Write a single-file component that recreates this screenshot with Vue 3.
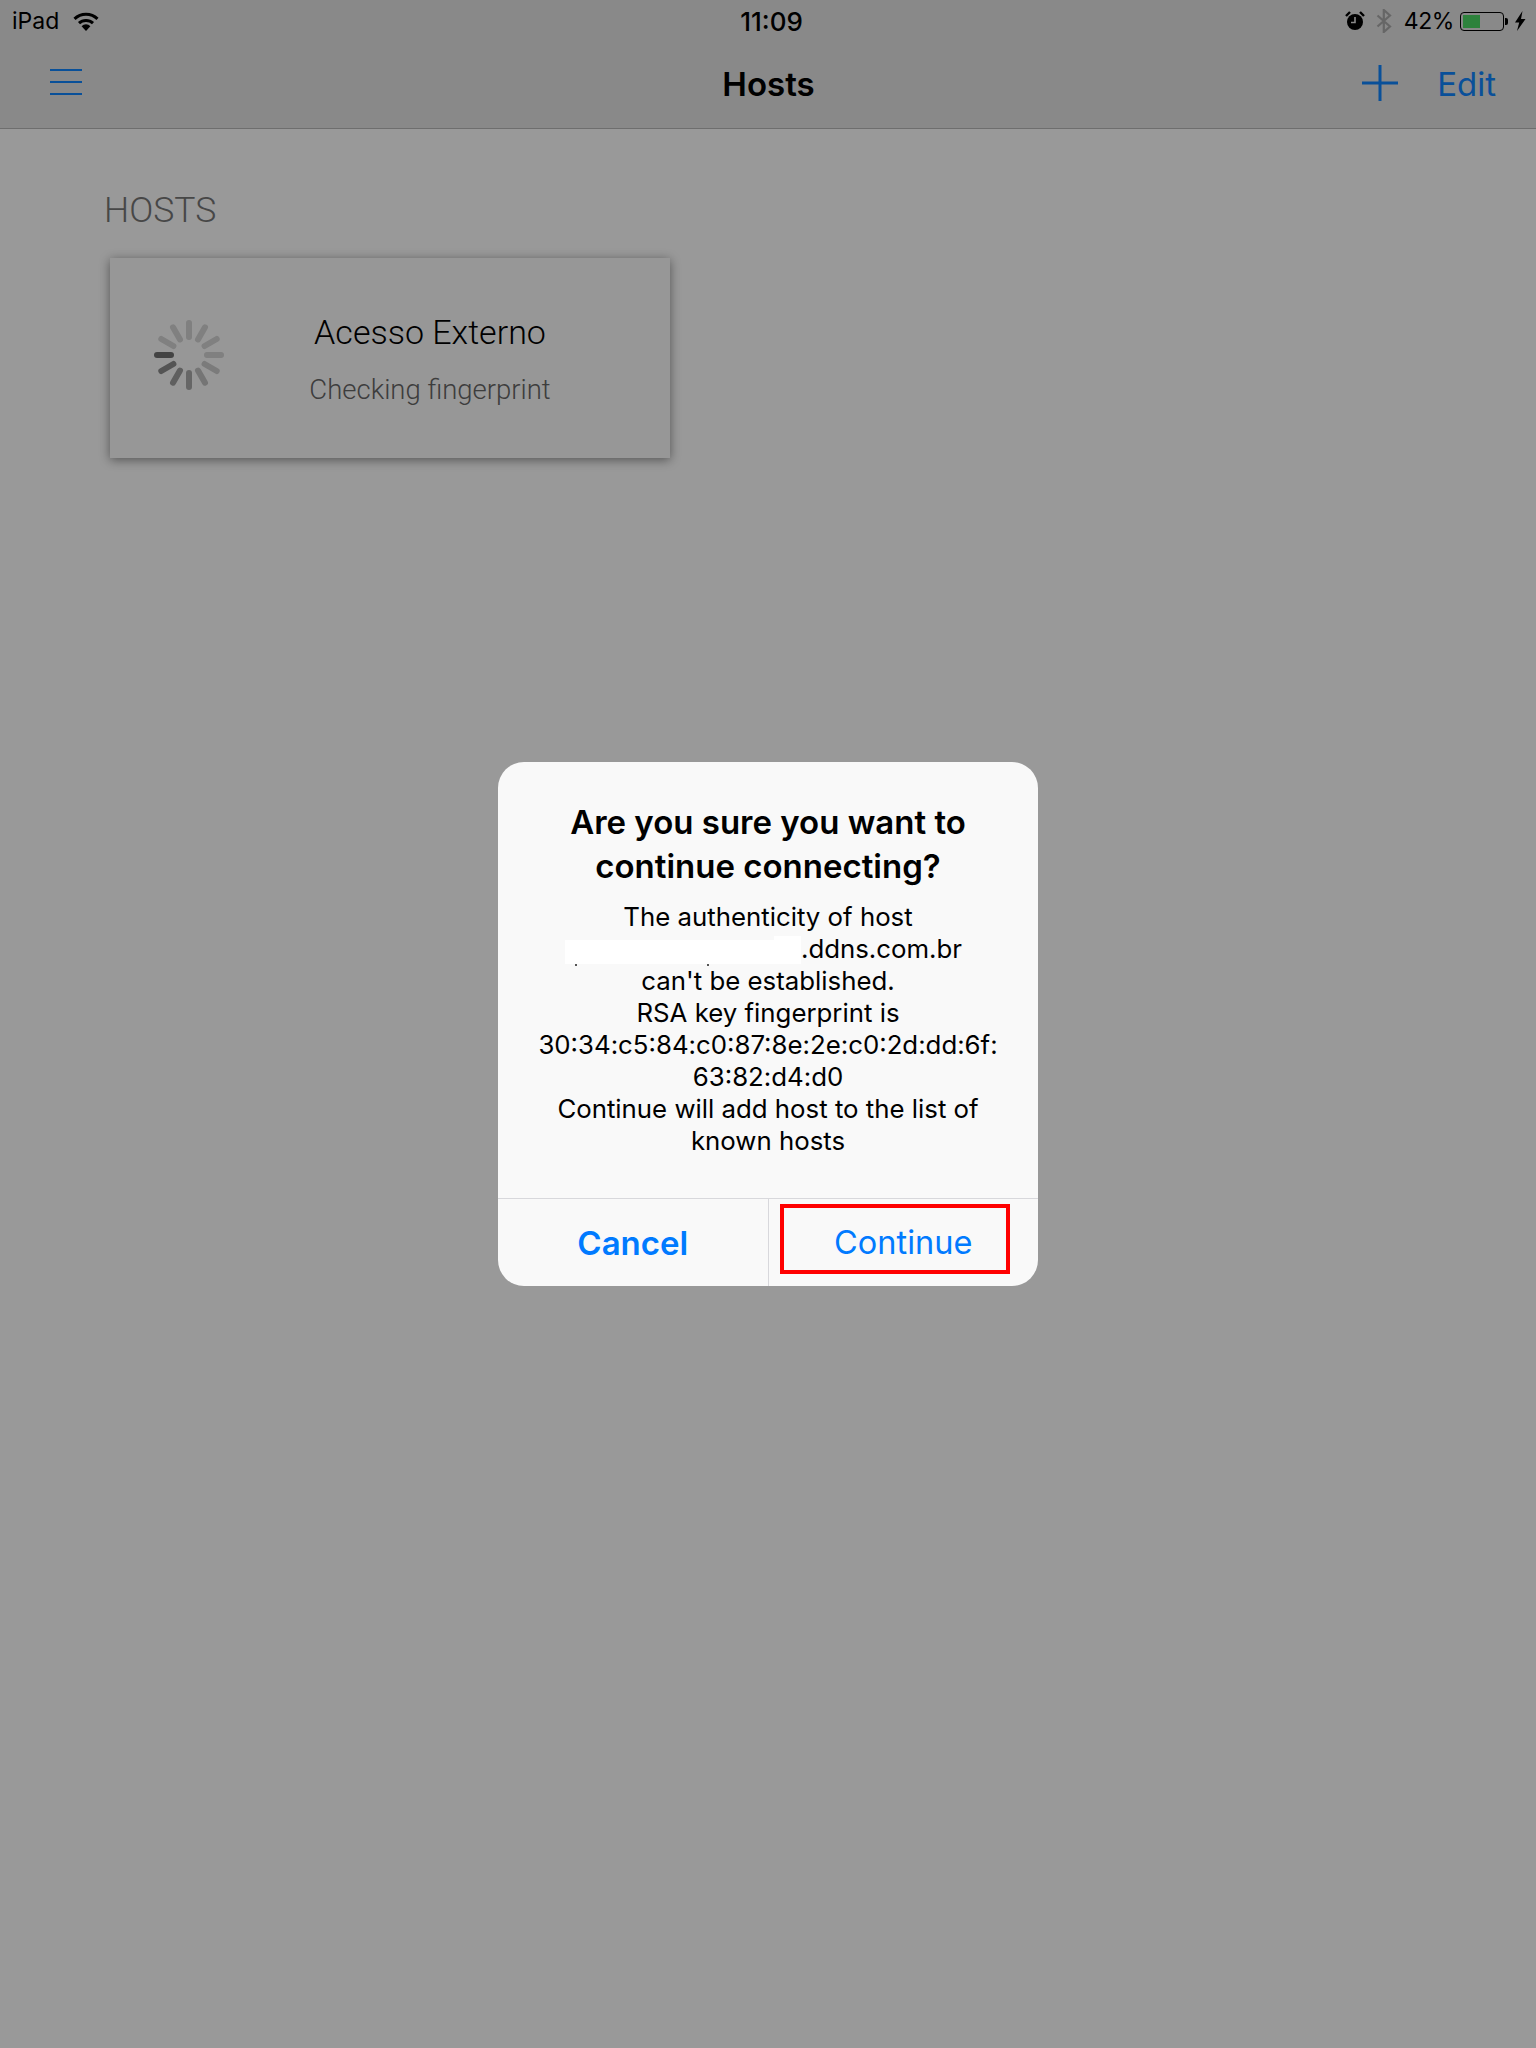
<script setup>
// spokes of the activity indicator, clockwise from 9 o'clock; the grey sits under the scrim
const spokeGreys = [113, 213, 213, 213, 213, 213, 213, 205, 195, 170, 158, 140]
const spokes = spokeGreys.map((g, i) => ({
  angle: i * 30,
  color: `rgb(${g},${g},${g})`,
}))

const message = [
  "can't be established.",
  'RSA key fingerprint is',
  '30:34:c5:84:c0:87:8e:2e:c0:2d:dd:6f:',
  '63:82:d4:d0',
  'Continue will add host to the list of',
  'known hosts',
]
</script>

<template>
  <div class="page">
    <header class="top">
      <div class="status">
        <div class="status-left">
          <span>iPad</span>
          <svg class="wifi" width="26" height="19" viewBox="0 0 26 19">
            <path d="M1.5 6.8a16.5 16.5 0 0 1 23 0" fill="none" stroke="#000" stroke-width="3" />
            <path d="M6 11.2a10.2 10.2 0 0 1 14 0" fill="none" stroke="#000" stroke-width="3" />
            <path d="M8.6 14.2a6.2 6.2 0 0 1 8.8 0L13 19z" fill="#000" />
          </svg>
        </div>
        <div class="clock">11:09</div>
        <div class="status-right">
          <svg class="alarm" width="20" height="20" viewBox="0 0 20 20">
            <circle cx="10" cy="11" r="8" fill="#000" />
            <path d="M1 5l4-4M19 5l-4-4" stroke="#000" stroke-width="2.4" />
            <path d="M10 6v5.5H6" fill="none" stroke="#e4e4e4" stroke-width="1.6" />
          </svg>
          <svg class="bt" width="16" height="24" viewBox="0 0 16 24">
            <path d="M1.5 6.5L14 17.5L7.8 23V1L14 6.5L1.5 17.5" fill="none" stroke="#aaa" stroke-width="2.2" />
          </svg>
          <span class="percent">42%</span>
          <div class="battery">
            <div class="battery-fill"></div>
          </div>
          <div class="battery-nub"></div>
          <svg class="bolt" width="12" height="20" viewBox="0 0 12 20">
            <path d="M8.5 0L1 11.5h4.2L3 20l8.5-12H7z" fill="#000" />
          </svg>
        </div>
      </div>
      <div class="nav">
        <div class="burger">
          <span></span>
          <span></span>
          <span></span>
        </div>
        <div class="nav-title">Hosts</div>
        <div class="nav-actions">
          <svg class="plus" width="36" height="36" viewBox="0 0 36 36">
            <path d="M0 18H36M18 0V36" stroke="#1085ff" stroke-width="3" />
          </svg>
          <span class="edit">Edit</span>
        </div>
      </div>
    </header>

    <main class="content">
      <h2 class="section">HOSTS</h2>
      <div class="card">
        <svg class="spinner" width="70" height="70" viewBox="-35 -35 70 70">
          <line
            v-for="s in spokes"
            :key="s.angle"
            x1="-32"
            y1="0"
            x2="-18"
            y2="0"
            :stroke="s.color"
            stroke-width="6"
            stroke-linecap="round"
            :transform="`rotate(${s.angle})`"
          />
        </svg>
        <div class="card-text">
          <div class="card-name">Acesso Externo</div>
          <div class="card-state">Checking fingerprint</div>
        </div>
      </div>
    </main>

    <div class="scrim">
      <div class="dialog">
        <div class="dialog-body">
          <h1 class="dialog-title">Are you sure you want to<br>continue connecting?</h1>
          <div class="dialog-msg">
            <div>The authenticity of host</div>
            <div class="host-line"><span class="redact"></span>.ddns.com.br</div>
            <div v-for="line in message" :key="line">{{ line }}</div>
          </div>
        </div>
        <div class="dialog-buttons">
          <div class="btn btn-cancel">Cancel</div>
          <div class="btn btn-continue">Continue</div>
        </div>
        <div class="highlight"></div>
      </div>
    </div>
  </div>
</template>

<style scoped>
.page {
  position: relative;
  height: 2048px;
  overflow: hidden;
  background: #fff;
  font-family: Inter, "Liberation Sans", sans-serif;
  color: #000;
}

.top {
  height: 128px;
  background: #e4e4e4;
  border-bottom: 1px solid #b8b8b8;
}

.status {
  display: grid;
  grid-template-columns: 1fr auto 1fr;
  align-items: center;
  height: 42px;
  padding: 0 10px 0 12px;
  font-size: 23px;
}

.status-left {
  display: flex;
  align-items: center;
  gap: 14px;
}

.clock {
  margin-left: 5px;
  font-weight: 500;
  font-size: 26px;
}

.status-right {
  display: flex;
  align-items: center;
  justify-content: flex-end;
}

.bt {
  margin-left: 11px;
}

.percent {
  margin-left: 12px;
  font-size: 23px;
  letter-spacing: -0.4px;
}

.battery {
  width: 44px;
  height: 19px;
  margin-left: 6px;
  padding: 2px;
  border: 1px solid #000;
  border-radius: 4px;
  box-sizing: border-box;
}

.battery-fill {
  width: 17px;
  height: 100%;
  background: #4cd964;
}

.battery-nub {
  width: 3px;
  height: 7px;
  margin-left: 1px;
  background: #000;
  border-radius: 0 2px 2px 0;
}

.bolt {
  margin-left: 6px;
}

.nav {
  display: grid;
  grid-template-columns: 1fr auto 1fr;
  align-items: center;
  height: 84px;
  padding: 0 40px 0 41px;
}

.burger {
  display: flex;
  flex-direction: column;
  gap: 10px;
  margin: 0 0 4px 9px;
}

.burger span {
  display: block;
  width: 32px;
  height: 2px;
  background: #1085ff;
}

.nav-title {
  font-size: 33px;
  font-weight: 600;
}

.nav-actions {
  display: flex;
  align-items: center;
  justify-content: flex-end;
  gap: 39px;
}

.plus {
  margin-bottom: 3px;
}

.edit {
  font-size: 33px;
  color: #1085ff;
}

.content {
  padding: 61px 0 0 104px;
}

.section {
  margin: 0;
  font-family: Roboto, "Liberation Sans", sans-serif;
  font-size: 35.5px;
  font-weight: 300;
  line-height: 40px;
  color: #777;
}

.card {
  display: flex;
  align-items: center;
  width: 560px;
  height: 200px;
  margin: 28px 0 0 6px;
  background: #fcfcfc;
  box-shadow: 0 2px 10px rgba(0, 0, 0, 0.45);
}

.spinner {
  margin: 0 0 6px 44px;
  flex: none;
}

.card-text {
  flex: 1;
  padding: 2px 34px 0 0;
  text-align: center;
  font-family: Roboto, "Liberation Sans", sans-serif;
  font-weight: 300;
}

.card-name {
  font-size: 34px;
  line-height: 40px;
}

.card-state {
  margin-top: 21px;
  font-size: 27.5px;
  line-height: 34px;
  color: #666;
}

.scrim {
  position: absolute;
  inset: 0;
  display: flex;
  align-items: center;
  justify-content: center;
  background: rgba(0, 0, 0, 0.4);
}

.dialog {
  position: relative;
  width: 540px;
  height: 524px;
  display: flex;
  flex-direction: column;
  background: #f9f9f9;
  border-radius: 26px;
  text-align: center;
}

.dialog-body {
  flex: 1;
  padding-top: 38px;
}

.dialog-title {
  margin: 0;
  font-size: 33px;
  font-weight: 600;
  line-height: 44px;
}

.dialog-msg {
  margin-top: 13px;
  font-size: 25.8px;
  line-height: 32px;
}

.host-line {
  margin-right: 9px;
}

.redact {
  position: relative;
  display: inline-block;
  width: 236px;
  height: 24px;
  vertical-align: -6px;
  background: #fff;
}

.redact::before {
  content: "";
  position: absolute;
  right: 0;
  top: -4px;
  width: 27px;
  height: 4px;
  background: #fff;
}

/* leftovers of the text under the white-out */
.redact::after {
  content: "";
  position: absolute;
  left: 10px;
  bottom: -2px;
  width: 2px;
  height: 2px;
  background: #555;
  box-shadow: 132px 0 #555;
}

.dialog-buttons {
  display: flex;
  height: 87px;
  border-top: 1px solid #d8d8dc;
}

.btn {
  flex: 1 1 0;
  display: flex;
  align-items: center;
  justify-content: center;
  font-size: 33px;
  color: #007aff;
}

.btn-cancel {
  font-weight: 600;
  border-right: 1px solid #d8d8dc;
}

.btn-continue {
  font-size: 32.5px;
}

.highlight {
  position: absolute;
  left: 282px;
  top: 442px;
  width: 230px;
  height: 70px;
  box-sizing: border-box;
  border: 4px solid #f00;
}
</style>
